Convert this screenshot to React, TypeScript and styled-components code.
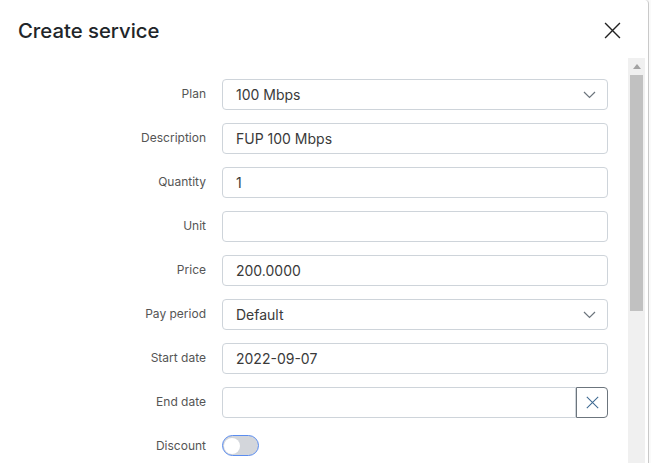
import React from 'react';
import styled, { createGlobalStyle } from 'styled-components';

const GlobalStyle = createGlobalStyle`
html, body {
    margin: 0;
    padding: 0;
    background: #f4f4f4;
    font-family: Inter, "Noto Sans", "Liberation Sans", sans-serif;
}
`;

const Page = styled.div`
display: flex;
width: 651px;
height: 463px;
overflow: hidden;
`;

const Modal = styled.div`
display: flex;
flex-direction: column;
width: 648px;
height: 463px;
background: #fff;
border-right: 1px solid #c9c9c9;
border-top-right-radius: 4px;
flex: 0 0 auto;
`;

const Backdrop = styled.div`
flex: 1;
background: #fafafa;
`;

const Header = styled.div`
display: flex;
justify-content: space-between;
align-items: center;
height: 58px;
padding: 2px 27px 0 18px;
box-sizing: border-box;
`;

const Title = styled.h5`
margin: 0;
font-size: 20.3px;
font-weight: 500;
color: #212529;
`;

const CloseButton = styled.button`
border: 0;
background: none;
padding: 0;
display: flex;
color: #333;
cursor: pointer;
`;

const Body = styled.div`
display: flex;
flex: 1;
padding-right: 3px;
min-height: 0;
`;

const Form = styled.div`
flex: 1;
display: grid;
grid-template-columns: 206px 386px;
grid-auto-rows: 31px;
row-gap: 13px;
column-gap: 16px;
padding-top: 21px;
align-content: start;
`;

const Label = styled.label`
justify-self: end;
align-self: center;
padding-bottom: 2px;
font-size: 12px;
color: #555;
`;

const InputBox = styled.div<{ $grouped?: boolean }>`
display: flex;
align-items: center;
justify-content: space-between;
box-sizing: border-box;
height: 31px;
padding: 0 11px 0 13px;
border: 1px solid #ced4da;
border-radius: ${({ $grouped }) => ($grouped ? '4px 0 0 4px' : '4px')};
font-size: 14px;
color: #3a3a3a;
background: #fff;
flex: 1;
`;

const InputGroup = styled.div`
display: flex;
`;

const ClearButton = styled.button`
width: 32px;
height: 31px;
box-sizing: border-box;
border: 1px solid #6c757d;
border-radius: 0 4px 4px 0;
background: #fff;
display: flex;
align-items: center;
justify-content: center;
padding: 0;
color: #4b6f8f;
`;

const Toggle = styled.div`
align-self: center;
width: 37px;
height: 21px;
margin-top: -2px;
box-sizing: border-box;
border: 1.5px solid #5b8def;
border-radius: 11px;
background: #d3d6db;
padding: 1px;
display: flex;
align-items: center;
`;

const Knob = styled.div`
width: 16px;
height: 16px;
border-radius: 50%;
background: #fff;
`;

const Scrollbar = styled.div`
width: 17px;
background: #f0f0f0;
display: flex;
flex-direction: column;
align-items: center;
`;

const ScrollArrow = styled.div`
height: 17px;
display: flex;
align-items: center;
justify-content: center;
`;

const ScrollThumb = styled.div`
width: 13px;
height: 236px;
background: #c1c1c1;
`;

const Chevron = () => (
    <svg width="13" height="8" viewBox="0 0 13 8" fill="none">
        <path d="M1 1l5.5 5.5L12 1" stroke="#6c757d" strokeWidth="1.2" />
    </svg>
);

const Cross = ({ size, color }: { size: number; color: string }) => (
    <svg width={size} height={size} viewBox="0 0 16 16" fill="none">
        <path d="M1 1l14 14M15 1L1 15" stroke={color} strokeWidth="1.3" />
    </svg>
);

const fields: { label: string; value: string; select?: boolean }[] = [
    { label: 'Plan', value: '100 Mbps', select: true },
    { label: 'Description', value: 'FUP 100 Mbps' },
    { label: 'Quantity', value: '1' },
    { label: 'Unit', value: '' },
    { label: 'Price', value: '200.0000' },
    { label: 'Pay period', value: 'Default', select: true },
    { label: 'Start date', value: '2022-09-07' },
];

const App: React.FC = () => {
    return <Page>
        <GlobalStyle />
        <Modal>
            <Header>
                <Title>Create service</Title>
                <CloseButton><Cross size={17} color="#222" /></CloseButton>
            </Header>
            <Body>
                <Form>
                    {fields.map(f => (
                        <React.Fragment key={f.label}>
                            <Label>{f.label}</Label>
                            <InputBox>
                                <span>{f.value}</span>
                                {f.select && <Chevron />}
                            </InputBox>
                        </React.Fragment>
                    ))}
                    <Label>End date</Label>
                    <InputGroup>
                        <InputBox $grouped />
                        <ClearButton><Cross size={13} color="#3f6a92" /></ClearButton>
                    </InputGroup>
                    <Label>Discount</Label>
                    <Toggle><Knob /></Toggle>
                </Form>
                <Scrollbar>
                    <ScrollArrow>
                        <svg width="8" height="5" viewBox="0 0 8 5"><path d="M0 5L4 0l4 5z" fill="#a3a3a3" /></svg>
                    </ScrollArrow>
                    <ScrollThumb />
                </Scrollbar>
            </Body>
        </Modal>
        <Backdrop />
    </Page>
}

export default App;
